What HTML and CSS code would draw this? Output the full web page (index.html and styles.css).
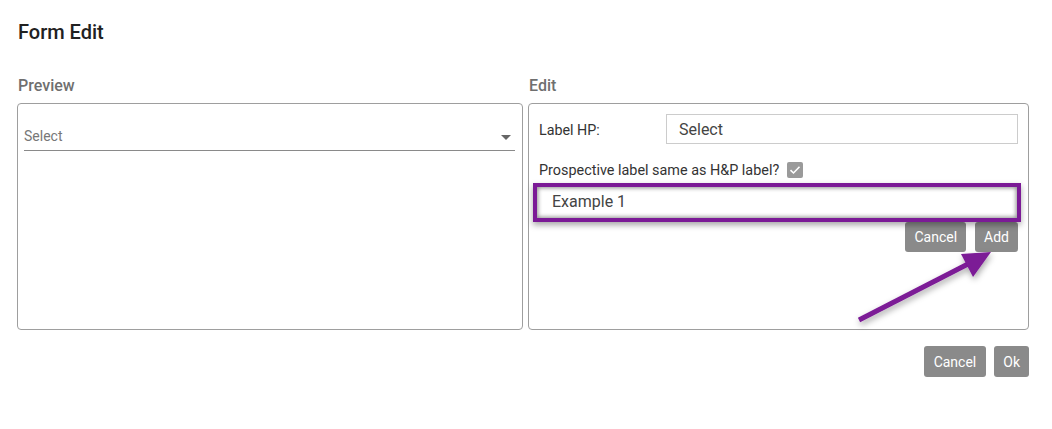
FILE: index.html
```html
<!DOCTYPE html>
<html>
<head>
<meta charset="utf-8">
<link rel="stylesheet" href="styles.css">
</head>
<body>
<div class="page">
  <h1 class="title">Form Edit</h1>
  <div class="columns">
    <section class="col">
      <div class="col-label">Preview</div>
      <div class="panel panel-left">
        <div class="select">
          <span class="select-text">Select</span>
          <span class="caret"></span>
        </div>
      </div>
    </section>
    <section class="col">
      <div class="col-label">Edit</div>
      <div class="panel panel-right">
        <div class="row">
          <span class="row-label">Label HP:</span>
          <div class="input">Select</div>
        </div>
        <div class="check-row">
          <span>Prospective label same as H&amp;P label?</span>
          <span class="checkbox">
            <svg width="12" height="10" viewBox="0 0 12 10"><path d="M1.5 5.2 L4.5 8 L10.5 1.8" fill="none" stroke="#fff" stroke-width="1.6"/></svg>
          </span>
        </div>
        <div class="highlight">Example 1</div>
        <div class="btn-row inner">
          <button class="btn">Cancel</button>
          <button class="btn">Add</button>
        </div>
      </div>
    </section>
  </div>
  <div class="btn-row footer">
    <button class="btn big wide">Cancel</button>
    <button class="btn big">Ok</button>
  </div>
</div>
<svg class="arrow" width="1052" height="429" viewBox="0 0 1052 429">
  <defs>
    <filter id="sh" x="-20%" y="-20%" width="140%" height="140%">
      <feDropShadow dx="1" dy="3" stdDeviation="3" flood-color="#000" flood-opacity="0.35"/>
    </filter>
  </defs>
  <g filter="url(#sh)" fill="#7b1a96" stroke="#7b1a96">
    <line x1="859" y1="320" x2="968" y2="264" stroke-width="5"/>
    <polygon points="961,254 991,252 973,277" stroke-width="0"/>
  </g>
</svg>
</body>
</html>
```
FILE: styles.css
```css
* { box-sizing: border-box; }
html, body { margin: 0; padding: 0; background: #fff; }
body {
  font-family: Roboto, "Noto Sans", sans-serif;
  width: 1052px;
  height: 429px;
  position: relative;
  overflow: hidden;
}
.page {
  padding: 21px 23px 0 17px;
}
.title {
  margin: 0 0 0 1px;
  font-size: 20px;
  font-weight: 500;
  line-height: 23px;
  color: #212121;
}
.columns {
  display: grid;
  grid-template-columns: 506px 501px;
  column-gap: 5px;
  margin-top: 32px;
}
.col-label {
  font-size: 16px;
  font-weight: 500;
  color: #6f6f6f;
  line-height: 19px;
  height: 19px;
  margin-left: 1px;
}
.panel {
  margin-top: 8px;
  height: 227px;
  border: 1px solid #9e9e9e;
  border-radius: 4px;
}
.panel-left {
  padding: 21px 7px 0 6px;
}
.select {
  display: flex;
  align-items: center;
  justify-content: space-between;
  height: 26px;
  border-bottom: 1px solid #8a8a8a;
}
.select-text {
  font-size: 14px;
  color: #777;
  line-height: 16px;
  margin-top: -3px;
}
.caret {
  width: 0; height: 0;
  border-left: 5px solid transparent;
  border-right: 5px solid transparent;
  border-top: 5px solid #666;
  margin-right: 4px;
}
.panel-right {
  padding: 10px 10px 0 4px;
  display: flex;
  flex-direction: column;
}
.row {
  display: flex;
  align-items: center;
  padding-left: 6px;
}
.row-label {
  width: 127px;
  font-size: 14.3px;
  color: #333;
  padding-top: 2px;
}
.input {
  flex: 1;
  height: 30px;
  border: 1px solid #ccc;
  font-size: 16px;
  color: #444;
  padding: 6px 12px 0;
  line-height: 18px;
}
.check-row {
  display: flex;
  align-items: center;
  gap: 8px;
  padding-left: 6px;
  margin-top: 18px;
  font-size: 14.4px;
  color: #333;
  height: 16px;
}
.checkbox {
  width: 16px;
  height: 16px;
  background: #9a9a9a;
  border-radius: 2px;
  display: flex;
  align-items: center;
  justify-content: center;
}
.highlight {
  margin-top: 5px;
  height: 39px;
  margin-right: -3px;
  border: 4px solid #7b1a96;
  box-shadow: inset 0 0 4px 1px rgba(0,0,0,0.45), 0 3px 6px rgba(0,0,0,0.35);
  font-size: 16px;
  color: #444;
  padding: 6px 15px;
  line-height: 18px;
  position: relative;
  z-index: 1;
}
.btn-row {
  display: flex;
  justify-content: flex-end;
}
.btn-row.inner {
  gap: 9px;
  margin-top: 0;
}
.btn {
  font-family: Roboto, "Noto Sans", sans-serif;
  font-size: 14px;
  color: #fff;
  background: #8a8a8a;
  border: none;
  border-radius: 3px;
  height: 30px;
  padding: 0 9px;
  line-height: 30px;
}
.btn-row.footer {
  gap: 8px;
  margin-top: 16px;
}
.btn.big {
  height: 31px;
  padding: 0 9px;
}
.btn.big.wide {
  padding: 0 10px;
}
.arrow {
  position: absolute;
  left: 0; top: 0;
  pointer-events: none;
}
```
